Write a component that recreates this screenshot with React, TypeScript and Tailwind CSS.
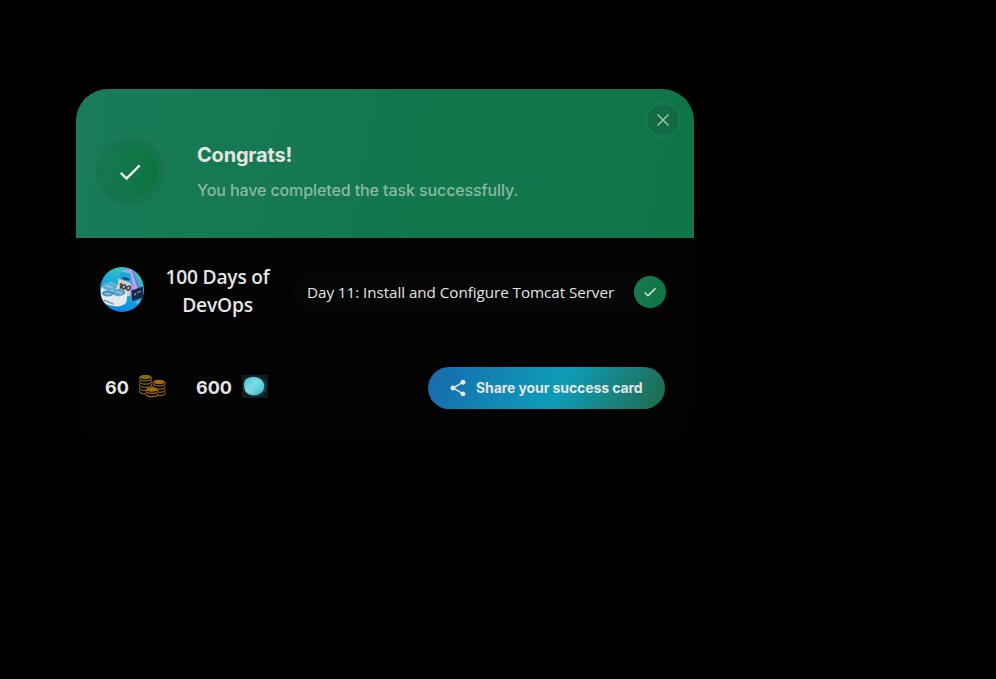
import React from "react";

function Check({ className }: { className: string }) {
  return (
    <svg viewBox="0 0 24 24" className={className} fill="currentColor">
      <path d="M9 16.17 4.83 12l-1.42 1.41L9 19 21 7l-1.41-1.41z" />
    </svg>
  );
}

function CourseBadge() {
  return (
    <svg width="44" height="45" viewBox="0 0 45 46" className="block shrink-0">
      <defs>
        <linearGradient id="sky" x1="0.9" y1="0" x2="0.4" y2="1">
          <stop offset="0" stopColor="#48ccb0" />
          <stop offset="0.45" stopColor="#1cb0d6" />
          <stop offset="1" stopColor="#0d83e4" />
        </linearGradient>
        <clipPath id="disc">
          <ellipse cx="22.5" cy="23" rx="22.5" ry="23" />
        </clipPath>
      </defs>
      <g clipPath="url(#disc)">
        <rect width="45" height="46" fill="url(#sky)" />
        <path d="M22 4l10-2 8 20-6 9-8-10z" fill="#b3a6ea" />
        <path d="M32 2l1.500 1 7.500 19-2 2z" fill="#8273cf" />
        <path d="M21 5l10 1 2 11-13-3z" fill="#1ba8e2" />
        <path d="M23 10l7 1.500v2.500l-7-1.500z" fill="#124d70" />
        <path d="M19 12l12 4 1 13-3 1-12-6z" fill="#d8cdc5" />
        <path d="M31 16l3 1 0 12-3 2z" fill="#9f90d2" />
        <path d="M32 24l12-4v11l-11 4z" fill="#1c2847" />
        <path d="M35 27l2 1-2 1M38 26l4-1" stroke="#b9c5d8" fill="none" strokeWidth=".8" />
        <path d="M1 23q1-6 8-7 7-1 11 6 8 1 8 6l-1 8q-5 6-14 4Q3 38 1 33z" fill="#e2eaf0" />
        <ellipse cx="10" cy="20" rx="7.500" ry="4" fill="#60abd0" />
        <ellipse cx="19" cy="26" rx="7" ry="3.800" fill="#5ba5cb" />
        <ellipse cx="8" cy="27" rx="6" ry="3.200" fill="#4796c4" />
        <path d="M6 19l7 2M16 25l6 2M5 27l6 1" stroke="#a9d1e3" strokeWidth="1.2" />
        <path d="M4 34l10 4" stroke="#5d9fc4" strokeWidth="1.5" />
        <text x="18.500" y="21.500" transform="rotate(17 18.500 21.500)" fontFamily="Inter, sans-serif" fontSize="7.500" fontWeight="800" textLength="12.500" fill="#16191e">100</text>
        <path d="M36 36l4-2 3 2-5 2z" fill="#54b9e6" />
      </g>
    </svg>
  );
}

function Stack({ x, y, rows, color, edge }: { x: number; y: number; rows: number; color: string; edge: string }) {
  return (
    <g>
      {Array.from({ length: rows }, (_, i) => (
        <path
          key={i}
          d={`M${x} ${y + 2.6 + i * 3.2}v1q0 2.3 6 2.3t6-2.300v-1`}
          fill="none"
          stroke={edge}
          strokeWidth="1.200"
        />
      ))}
      <ellipse cx={x + 6} cy={y + 2} rx="6" ry="2.2" fill={color} />
    </g>
  );
}

function Coins() {
  return (
    <svg width="28" height="24" viewBox="0 0 28 24" className="block">
      <Stack x={1.5} y={0} rows={5} color="#857006" edge="#82600c" />
      <Stack x={15} y={5} rows={4} color="#a56a0a" edge="#905a0b" />
      <ellipse cx="14" cy="18" rx="7" ry="5.3" fill="#020202" />
      <Stack x={8} y={12.5} rows={2} color="#a86b0a" edge="#a0640b" />
    </svg>
  );
}

function Gem() {
  return (
    <svg width="26" height="23" viewBox="0 0 26 23" className="block">
      <defs>
        <radialGradient id="halo">
          <stop offset="0.6" stopColor="#2b5f67" />
          <stop offset="1" stopColor="#111b1e" />
        </radialGradient>
        <linearGradient id="gem" x1="0" y1="0" x2="1" y2="1">
          <stop offset="0" stopColor="#48bdd4" />
          <stop offset="0.45" stopColor="#7cdbe5" />
          <stop offset="0.65" stopColor="#62cfe0" />
          <stop offset="1" stopColor="#52a5b5" />
        </linearGradient>
      </defs>
      <rect width="26" height="23" fill="url(#halo)" />
      <path d="M4 4Q9 1 15 2.500Q20 4 22 9Q23 16 17 19Q10 22 5 18Q2 15 2 10Q2 6 4 4z" fill="url(#gem)" />
      <path d="M8 5q6 3 11 9" stroke="#93e4ec" strokeWidth="1" fill="none" opacity=".35" />
    </svg>
  );
}

export default function App() {
  return (
    <div className="min-h-screen bg-black pl-[76px] pt-[89px] font-['Inter',sans-serif] text-[#e5e5e3]">
      <div className="h-[354px] w-[618px] overflow-hidden rounded-[32px] bg-[#020202]">
        <header className="relative flex h-[149px] items-start bg-linear-[100deg,#1b7b59,#12774e_50%,#0f7547] pl-5 pt-[48px]">
          <div className="flex size-[69px] items-center justify-center rounded-full bg-[#187351]">
            <div className="flex size-[55px] items-center justify-center rounded-full bg-linear-[100deg,#187852,#0b733f]">
              <Check className="mr-px size-[28px] text-[#e8ebe6]" />
            </div>
          </div>
          <div className="ml-8 pt-[3px]">
            <h1 className="text-[20px] font-bold leading-[30px] tracking-[-0.2px]">Congrats!</h1>
            <p className="mt-[8px] text-[16px] font-medium leading-[24px] tracking-[-0.1px] text-[#8bb9a3]">
              You have completed the task successfully.
            </p>
          </div>
          <button className="absolute right-[14px] top-[14px] flex size-[34px] items-center justify-center rounded-full border border-[#2d7d5a] bg-[#116c45]">
            <svg viewBox="0 0 12 12" className="size-3 text-[#a0c0ae]" fill="none" stroke="currentColor" strokeWidth="1.5">
              <path d="M.5.5l11 11M11.500.5l-11 11" />
            </svg>
          </button>
        </header>
        <section className="mx-6 flex h-[105px] items-start border-b border-[#050606] font-['Open_Sans',sans-serif]">
          <div className="pt-[29px]">
            <CourseBadge />
          </div>
          <h2 className="ml-[17px] w-[113px] whitespace-nowrap pt-[25px] text-center text-[19.2px] font-semibold leading-[28px] tracking-[-0.2px]">
            100 Days of
            <br />
            DevOps
          </h2>
          <div className="ml-[17px] mt-[34px] flex h-[41px] w-[379px] shrink-0 items-center justify-between rounded-full bg-[#040605] pl-4 pr-1">
            <span className="whitespace-nowrap text-[15.2px] tracking-[-0.04px]">
              Day 11: Install and Configure Tomcat Server
            </span>
            <span className="mb-[2px] flex size-8 items-center justify-center rounded-full bg-linear-[100deg,#187b54,#0e7445]">
              <Check className="size-4 text-[#e4e8e3]" />
            </span>
          </div>
        </section>
        <section className="flex items-center pl-[29px] pr-[29px] pt-6">
          <span className="w-[33px] pb-px text-[18px] font-bold">60</span>
          <div className="w-[58px] pb-[2px]">
            <Coins />
          </div>
          <span className="w-[46px] pb-px text-[18px] font-bold">600</span>
          <div className="pb-[3px]">
            <Gem />
          </div>
          <button className="ml-auto flex h-[42px] w-[237px] items-center rounded-full bg-linear-[115deg,#1769ad,#0d9db8_55%,#20694a] pl-[20px] text-[14px] font-bold tracking-[-0.09px]">
            <svg viewBox="0 0 24 24" className="mr-2 size-5 shrink-0" fill="currentColor">
              <path d="M18 16.080c-.76 0-1.440.3-1.960.77L8.910 12.700c.05-.23.09-.46.09-.7s-.04-.47-.09-.7l7.050-4.110c.54.5 1.250.81 2.040.81 1.660 0 3-1.340 3-3s-1.340-3-3-3-3 1.340-3 3c0 .24.04.47.09.7L8.040 9.810C7.500 9.310 6.790 9 6 9c-1.660 0-3 1.340-3 3s1.340 3 3 3c.79 0 1.500-.31 2.040-.81l7.120 4.160c-.05.21-.08.43-.08.65 0 1.610 1.310 2.920 2.920 2.920s2.920-1.310 2.920-2.920-1.310-2.920-2.920-2.920" />
            </svg>
            <span className="whitespace-nowrap pb-px">Share your success card</span>
          </button>
        </section>
      </div>
    </div>
  );
}
